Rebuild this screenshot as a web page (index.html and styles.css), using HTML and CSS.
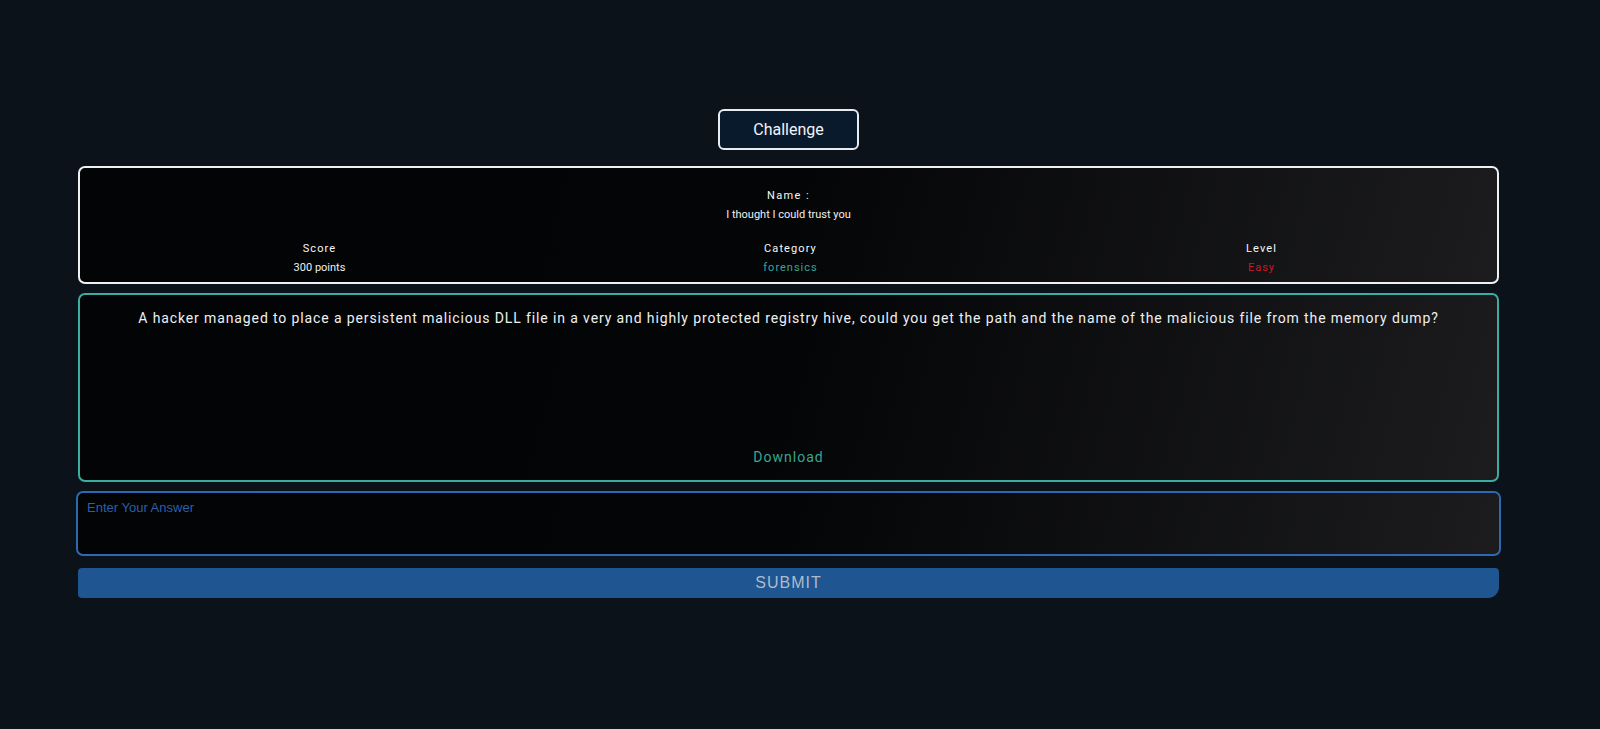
FILE: index.html
```html
<!DOCTYPE html>
<html lang="en">
<head>
<meta charset="utf-8">
<title>Challenge</title>
<link rel="stylesheet" href="styles.css">
</head>
<body>
<main class="page">
  <div class="title-wrap">
    <div class="title">Challenge</div>
  </div>
  <section class="card info">
    <div class="name-block">
      <div class="label name-label">Name :</div>
      <div class="value">I thought I could trust you</div>
    </div>
    <div class="meta">
      <div class="meta-col">
        <div class="label">Score</div>
        <div class="value">300 points</div>
      </div>
      <div class="meta-col">
        <div class="label">Category</div>
        <div class="value cat">forensics</div>
      </div>
      <div class="meta-col">
        <div class="label">Level</div>
        <div class="value lvl">Easy</div>
      </div>
    </div>
  </section>
  <section class="card desc">
    <p class="desc-text">A hacker managed to place a persistent malicious DLL file in a very and highly protected registry hive, could you get the path and the name of the malicious file from the memory dump?</p>
    <a class="download" href="#">Download</a>
  </section>
  <textarea class="answer" placeholder="Enter Your Answer"></textarea>
  <button class="submit">SUBMIT</button>
</main>
</body>
</html>
```
FILE: styles.css
```css
* { box-sizing: border-box; }
html, body { margin: 0; padding: 0; }
body {
  background: #0b121a;
  font-family: Roboto, "Liberation Sans", sans-serif;
  color: #f0f0f0;
  min-height: 729px;
}
.page {
  width: 1421px;
  margin-left: 78px;
  padding-top: 109px;
  display: flex;
  flex-direction: column;
}
.title-wrap {
  display: flex;
  justify-content: center;
  margin-bottom: 16px;
}
.title {
  width: 141px;
  height: 41px;
  border: 2px solid #e8ecf0;
  border-radius: 6px;
  background: #0a1a2d;
  color: #f2f4f6;
  font-size: 16px;
  display: flex;
  align-items: center;
  justify-content: center;
}
.card {
  border-radius: 7px;
  background: linear-gradient(105deg, #030405 0%, #040507 50%, #1c1c1e 100%);
}
.info {
  height: 118px;
  border: 2px solid #eef0f2;
  padding: 18px 0 0;
  text-align: center;
}
.label {
  font-size: 11px;
  line-height: 19px;
  letter-spacing: 1.1px;
  font-weight: 400;
  color: #f6f7f8;
}
.name-label { letter-spacing: 1.4px; }
.value {
  font-size: 11px;
  line-height: 19px;
  color: #f0f0f0;
}
.meta {
  margin-top: 15px;
  padding-left: 4px;
  display: grid;
  grid-template-columns: 1fr 1fr 1fr;
}
.cat { color: #3aa593; letter-spacing: 1px; }
.lvl { color: #c8192b; letter-spacing: 1px; }
.desc {
  margin-top: 9px;
  height: 189px;
  border: 2px solid #3aaea0;
  padding: 13px 10px 13px;
  display: flex;
  flex-direction: column;
  align-items: center;
  justify-content: space-between;
}
.desc-text {
  margin: 0;
  font-size: 14px;
  line-height: 20px;
  letter-spacing: 0.88px;
  color: #eef0f2;
  text-align: center;
}
.download {
  font-size: 14px;
  line-height: 20px;
  letter-spacing: 1px;
  color: #38a594;
  text-decoration: none;
}
.answer {
  margin: 9px -2px 0;
  height: 65px;
  border: 2px solid #2d69b1;
  border-radius: 7px;
  background: linear-gradient(105deg, #030405 0%, #040507 50%, #1c1c1e 100%);
  padding: 7px 9px;
  font-family: "Liberation Sans", Arial, sans-serif;
  font-size: 13px;
  color: #d0d8e0;
  resize: none;
  outline: none;
}
.answer::placeholder { color: #2a5fae; opacity: 1; }
.submit {
  margin-top: 12px;
  height: 30px;
  border: none;
  border-radius: 4px 4px 11px 4px;
  background: #1f5591;
  color: #adbccd;
  font-family: "Liberation Sans", Arial, sans-serif;
  font-size: 16px;
  letter-spacing: 1px;
  padding: 0;
}
```
